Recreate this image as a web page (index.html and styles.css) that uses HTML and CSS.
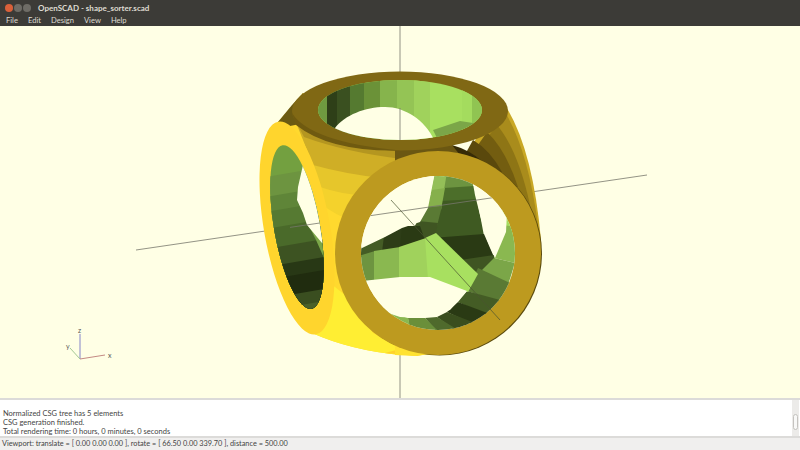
FILE: index.html
```html
<!DOCTYPE html>
<html lang="en">
<head>
  <meta charset="UTF-8">
  <title>OpenSCAD - shape_sorter.scad</title>
  <link rel="stylesheet" href="styles.css">
</head>
<body>
  <div class="window">
    <div class="titlebar">
      <div class="window-buttons">
        <span class="btn btn-close"></span>
        <span class="btn"></span>
        <span class="btn"></span>
      </div>
      <div class="window-title">OpenSCAD - shape_sorter.scad</div>
    </div>
    <div class="menubar">
      <span class="menu-item">File</span>
      <span class="menu-item">Edit</span>
      <span class="menu-item">Design</span>
      <span class="menu-item">View</span>
      <span class="menu-item">Help</span>
    </div>

    <div class="viewport">
      <svg class="scene" width="800" height="372" viewBox="0 26 800 372" xmlns="http://www.w3.org/2000/svg">
        <defs>
          <clipPath id="top-hole"><ellipse cx="400" cy="110" rx="82" ry="30"/></clipPath>
          <clipPath id="left-hole"><ellipse cx="297" cy="227" rx="23" ry="83" transform="rotate(-10 297 227)"/></clipPath>
          <clipPath id="front-hole"><ellipse cx="438" cy="253" rx="77" ry="77"/></clipPath>
        </defs>

        <!-- axes behind the model -->
        <g class="axis">
          <line x1="136" y1="250" x2="647" y2="175"/>
          <line x1="400" y1="26" x2="400" y2="398"/>
        </g>

        <!-- body: left top face, lightest first -->
        <path fill="#ffd92e" d="M278 122L303 93L420 140L420 340L400 355Q350 350 312 333Z"/>
        <path fill="#f4d22c" d="M300 120L420 130L347 219Q335 214 325 207Z"/>
        <path fill="#e6c62b" d="M300 120L420 130L362 195Q340 194 320 187Z"/>
        <path fill="#cfae26" d="M295 120L420 130L382 178Q345 174 313 165Z"/>
        <path fill="#b49620" d="M295 120L420 130L402 159Q345 152 304 137Z"/>
        <path fill="#8a7216" d="M292 112L420 130L402 152Q340 145 298 124Z"/>
        <path fill="#6b5a12" d="M278 122L292 105L303 93L320 120L290 126Z"/>

        <!-- body: bottom -->
        <path fill="#ffee33" d="M330 283L345 295L373 333L400 348L400 355Q350 350 312 333Z"/>
        <path fill="#ffd22c" d="M385 353L400 349L440 352L417 356Z"/>

        <!-- body: right side fan, outermost first -->
        <path fill="#c9a825" d="M500 98Q532 140 541 240L440 200Z"/>
        <path fill="#a98c1c" d="M505 112Q528 150 538 225L440 200Z"/>
        <path fill="#8e7515" d="M497 125Q518 150 530 205L440 200Z"/>
        <path fill="#735d10" d="M487 132Q506 150 518 187L440 200Z"/>
        <path fill="#5a480c" d="M473 140Q490 150 502 172L440 200Z"/>
        <path fill="#362b07" d="M452 145Q470 150 483 162L440 200Z"/>
        <path fill="#6b5712" d="M395 145L452 145L460 155L430 157L395 170Z"/>

        <!-- top ring -->
        <ellipse fill="#806814" cx="400" cy="111" rx="108" ry="39.5"/>
        <path fill="#6f5a10" d="M292 113Q310 142 400 150.5Q330 152 296 125Z"/>
        <g clip-path="url(#top-hole)">
          <rect fill="#a8e060" x="318" y="80" width="164" height="60"/>
          <rect fill="#6f9a40" x="318" y="80" width="9" height="60"/>
          <rect fill="#2e3f18" x="327" y="80" width="10" height="60"/>
          <rect fill="#3a5020" x="337" y="80" width="13" height="60"/>
          <rect fill="#557a30" x="350" y="80" width="14" height="60"/>
          <rect fill="#6b9238" x="364" y="80" width="16" height="60"/>
          <rect fill="#86b44c" x="380" y="80" width="17" height="60"/>
          <rect fill="#94c455" x="397" y="80" width="17" height="60"/>
          <rect fill="#a0d25c" x="414" y="80" width="16" height="60"/>
          <rect fill="#a4dc5e" x="462" y="80" width="10" height="60"/>
          <rect fill="#90c452" x="472" y="80" width="10" height="60"/>
          <path class="hole-bg" d="M335 128C345 115 365 107 385 107C405 107 425 120 434 140L430 150L330 150Z"/>
          <path fill="#7ba648" d="M433 130L460 121L473 123L480 130L445 145L438 140Z"/>
          <line class="axis-line" x1="400" y1="108" x2="400" y2="140"/>
        </g>

        <!-- left ring -->
        <ellipse fill="#ffd52d" cx="297" cy="228" rx="33" ry="108" transform="rotate(-10 297 228)"/>
        <g clip-path="url(#left-hole)">
          <rect fill="#73a040" x="260" y="140" width="70" height="180"/>
          <path fill="#6d9440" d="M260 178L330 166V320H260Z"/>
          <path fill="#5f8538" d="M260 198L330 186V320H260Z"/>
          <path fill="#567a32" d="M260 213L330 201V320H260Z"/>
          <path fill="#4a6a2a" d="M260 230L330 218V320H260Z"/>
          <path fill="#3d5322" d="M260 250L330 238V320H260Z"/>
          <path fill="#283815" d="M260 268L330 256V320H260Z"/>
          <path fill="#202c0f" d="M260 281L330 269V320H260Z"/>
          <path fill="#3a4e20" d="M260 300L330 288V320H260Z"/>
          <path fill="#4a6029" d="M260 312L330 300V320H260Z"/>
          <path fill="#7ba648" d="M306 220L324 240V258L316 240Z"/>
          <path class="hole-bg" d="M303 165L325 165L326 245L322 243L307 225L303 213L297 200L298 187Z"/>
          <line class="axis-line" x1="290" y1="227.4" x2="330" y2="221.5"/>
        </g>

        <!-- front ring and what shows through it -->
        <ellipse fill="#5a4a0c" cx="439.5" cy="253.5" rx="102.5" ry="102"/>
        <path fill="#ffe230" d="M395 340L440 352L415 356L395 355Z"/>
        <ellipse fill="#bd9a1f" cx="438" cy="253" rx="103" ry="102"/>
        <g clip-path="url(#front-hole)">
          <rect class="hole-bg" x="355" y="170" width="165" height="165"/>
          <!-- upper arm -->
          <path fill="#6d9440" d="M445 172L474 172L473 188L443 190Z"/>
          <path fill="#4c6e2a" d="M444 188L474 186L477 201L441 203Z"/>
          <path fill="#3f5a22" d="M441 201L477 199L484 236L432 240Z"/>
          <path fill="#2a3a14" d="M432 238L484 234L494 257L462 262L440 248Z"/>
          <path fill="#3f5522" d="M460 260L494 255L497 266L478 274Z"/>
          <!-- curved wall, top of arm round to the left -->
          <path fill="#94bf58" d="M435 172L447 172L444 190L430 194Z"/>
          <path fill="#86b04c" d="M432 190L445 188L441 210L425 210Z"/>
          <path fill="#5a7a34" d="M427 207L442 206L437 226L416 224Z"/>
          <path fill="#3f5522" d="M418 221L438 223L434 240L404 242Z"/>
          <path fill="#2a3a14" d="M404 226L420 226L425 240L400 248L382 250L380 238Z"/>
          <path fill="#2d3d17" d="M382 235L402 228L400 248L378 252Z"/>
          <path fill="#445c25" d="M355 250L384 236L382 252L358 258Z"/>
          <!-- right wall and rim -->
          <path fill="#a4dc5e" d="M490 186L520 225L515 240L507 232L500 205Z"/>
          <path fill="#8ab850" d="M504 225L520 228L515 263L494 258Z"/>
          <path fill="#7ba648" d="M494 258L515 263L508 285L480 272Z"/>
          <path fill="#5a7a34" d="M478 268L510 283L500 302L467 291Z"/>
          <path fill="#445c25" d="M467 291L500 300L488 316L458 302Z"/>
          <path fill="#2a3a14" d="M458 302L490 314L475 325L447 312Z"/>
          <path fill="#3a4e1e" d="M447 312L475 323L457 332L437 317Z"/>
          <path fill="#4f6a2c" d="M437 317L458 330L440 335L425 318Z"/>
          <path fill="#6a8f3a" d="M425 318L442 335L410 335L408 318Z"/>
          <path fill="#8ab850" d="M408 318L412 335L385 330L388 312Z"/>
          <path fill="#72a03c" d="M388 312L388 332L360 315L368 294Z"/>
          <!-- light band -->
          <path fill="#6d9440" d="M355 257L375 251L375 282L355 282Z"/>
          <path fill="#8ab850" d="M374 251L400 247L400 280L374 282Z"/>
          <path fill="#a0d25c" d="M399 247L426 238L430 280L399 280Z"/>
          <path fill="#a8e060" d="M425 238L436 233L478 274L468 292L428 280Z"/>
          <!-- background seen through -->
          <path class="hole-bg" d="M362 281L400 277L430 277L467 291L450 310L420 318L400 317L385 312L370 298Z"/>
          <path class="hole-bg" d="M472 178L495 188L507 213L506 232L495 258L487 240L480 215L475 195Z"/>
          <path class="hole-bg" d="M358 250L385 237L402 228L420 222L428 208L435 172L400 160L350 210Z"/>
          <line class="axis-line" x1="360" y1="217.2" x2="520" y2="193.7"/>
        </g>
        <line class="axis-dark" x1="391" y1="200" x2="500" y2="320"/>

        <!-- orientation gizmo -->
        <g class="gizmo">
          <line stroke="#8484c8" x1="80" y1="359" x2="80" y2="334"/>
          <line stroke="#c48a84" x1="80" y1="359" x2="105" y2="355"/>
          <line stroke="#a4c894" x1="80" y1="359" x2="70" y2="348"/>
          <text x="78" y="333">z</text>
          <text x="66" y="349">y</text>
          <text x="108" y="358">x</text>
        </g>
      </svg>
    </div>

    <div class="log">
      <div class="log-text">
        <div>Normalize csg tree...</div>
        <div>&nbsp;</div>
        <div>Normalized CSG tree has 5 elements</div>
        <div>CSG generation finished.</div>
        <div>Total rendering time: 0 hours, 0 minutes, 0 seconds</div>
      </div>
      <div class="scrollbar">
        <span class="scroll-thumb"></span>
      </div>
    </div>
    <div class="statusbar">Viewport: translate = [ 0.00 0.00 0.00 ], rotate = [ 66.50 0.00 339.70 ], distance = 500.00</div>
  </div>
</body>
</html>
```

FILE: styles.css
```css
:root {
  --canvas-color: #ffffe5;
  --chrome-dark: #3c3b37;
  --chrome-light: #f0efee;
  --text-color: #444444;
}

* {
  margin: 0;
  padding: 0;
  box-sizing: border-box;
}

body {
  width: 800px;
  height: 450px;
  overflow: hidden;
  font-family: Lato, "Noto Sans", sans-serif;
}

.window {
  display: flex;
  flex-direction: column;
  height: 100%;
}

/* Title and menu */
.titlebar {
  display: flex;
  align-items: center;
  height: 14px;
  padding: 2px 0 0 5px;
  background-color: var(--chrome-dark);
}

.window-buttons {
  display: flex;
  gap: 1px;
  width: 33px;
}

.btn {
  width: 8px;
  height: 8px;
  border-radius: 50%;
  background-color: #6e6c66;
}

.btn-close {
  background-color: #d9603a;
}

.window-title {
  color: #dfdbd2;
  font-size: 8px;
  font-weight: 700;
}

.menubar {
  display: flex;
  align-items: center;
  gap: 10px;
  height: 12px;
  padding-left: 6px;
  background-color: var(--chrome-dark);
  color: #dfdbd2;
  font-size: 7.6px;
}

/* 3D view */
.viewport {
  flex: 1;
  background-color: var(--canvas-color);
}

.scene {
  display: block;
}

.axis line,
.axis-line {
  stroke: #77776c;
  stroke-width: 0.8;
}

.axis-dark {
  stroke: #4a5530;
  stroke-width: 0.7;
}

.hole-bg {
  fill: var(--canvas-color);
}

.gizmo line {
  stroke-width: 1;
}

.gizmo text {
  font-size: 7px;
  fill: #555555;
}

/* Console */
.log {
  display: flex;
  height: 40px;
  border-top: 2px solid #dcdbd9;
  border-bottom: 2px solid #dcdbd9;
  background-color: #ffffff;
}

.log-text {
  flex: 1;
  display: flex;
  flex-direction: column;
  justify-content: flex-end;
  overflow: hidden;
  padding-left: 3px;
  color: var(--text-color);
  font-size: 7.5px;
  line-height: 9px;
}

.scrollbar {
  width: 7px;
  margin-right: 1px;
  padding: 6px 1px;
  background-color: #ecebe9;
}

.scroll-thumb {
  display: block;
  height: 16px;
  margin-top: 8px;
  border: 1px solid #c4c2bf;
  border-radius: 3px;
  background-color: #f8f8f7;
}

.statusbar {
  height: 12px;
  padding-left: 2px;
  background-color: var(--chrome-light);
  color: var(--text-color);
  font-size: 7.35px;
  line-height: 12px;
}
```
